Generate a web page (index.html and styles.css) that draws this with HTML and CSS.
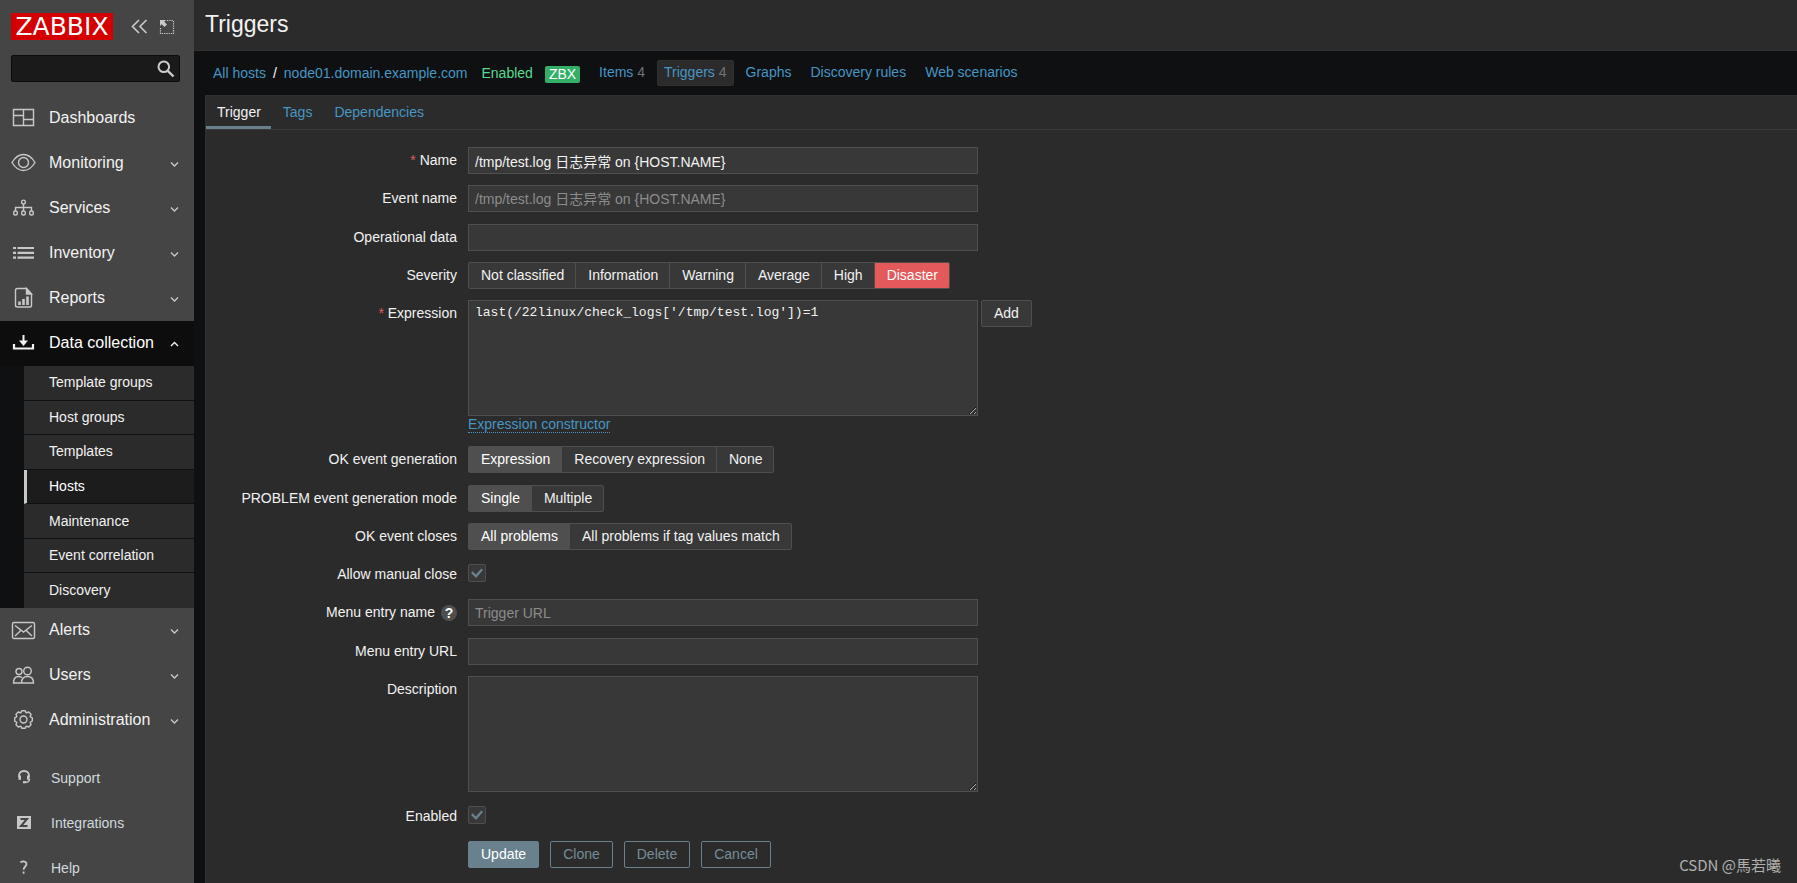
FILE: index.html
```html
<!DOCTYPE html>
<html lang="en">
<head>
<meta charset="utf-8">
<title>Triggers</title>
<link rel="stylesheet" href="styles.css">
</head>
<body>
<aside class="sidebar">
  <div class="sidebar-header">
    <a class="logo" href="#">ZABBIX</a>
    <button class="icon-button" type="button" aria-label="Collapse sidebar">
      <svg width="17" height="15" viewBox="0 0 17 15"><path d="M8 1 1.500 7.500 8 14M15.500 1 9 7.500l6.500 6.500" fill="none" stroke="currentColor" stroke-width="1.700"/></svg>
    </button>
    <button class="icon-button" type="button" aria-label="Hide sidebar">
      <svg width="16" height="16" viewBox="0 0 16 16"><path d="M8 1.500h6.500v13h-13V8" fill="none" stroke="currentColor" stroke-width="1.200" stroke-dasharray="1.300 1"/><path d="M1 1h6L5.300 2.700 8 5.400 5.400 8 2.700 5.300 1 7z" fill="currentColor"/></svg>
    </button>
  </div>
  <form class="search" role="search">
    <input class="search-input" type="text" aria-label="Search">
    <button class="search-button" type="button" aria-label="Search">
      <svg width="18" height="18" viewBox="0 0 18 18" fill="none" stroke="currentColor"><circle cx="6.800" cy="6.800" r="5.300" stroke-width="2"/><path d="m10.800 10.800 5.700 5.700" stroke-width="2.400"/></svg>
    </button>
  </form>
  <nav class="menu">
    <a class="menu-item" href="#"><svg class="menu-icon" viewBox="0 0 25 25"><path d="M2.500 4.500h20v16h-20zM12.500 4.500v16M2.500 10.500h10M12.500 14.500h10"/></svg><span class="menu-text">Dashboards</span></a>
    <a class="menu-item" href="#"><svg class="menu-icon" viewBox="0 0 25 25"><path d="M1 12.500C4 7.500 8 4.500 12.500 4.500s8.500 3 11.500 8c-3 5-7 8-11.500 8S4 17.500 1 12.500z"/><circle cx="12.500" cy="12.500" r="5"/></svg><span class="menu-text">Monitoring</span><svg class="chevron" viewBox="0 0 9 7"><path d="m1 1.500 3.500 3.500L8 1.500"/></svg></a>
    <a class="menu-item" href="#"><svg class="menu-icon" viewBox="0 0 25 25"><circle cx="12.500" cy="7" r="1.900"/><path d="M12.500 9v7M4.500 16v-3.500h16V16"/><rect x="2.700" y="16" width="3.600" height="4" rx="1.500"/><rect x="10.700" y="16" width="3.600" height="4" rx="1.500"/><rect x="18.700" y="16" width="3.600" height="4" rx="1.500"/></svg><span class="menu-text">Services</span><svg class="chevron" viewBox="0 0 9 7"><path d="m1 1.500 3.500 3.500L8 1.500"/></svg></a>
    <a class="menu-item" href="#"><svg class="menu-icon" viewBox="0 0 25 25"><path stroke-width="2.200" d="M2 8h3M2 12.800h3M2 17.600h3M6.500 8H23M6.500 12.800H23M6.500 17.600H23"/></svg><span class="menu-text">Inventory</span><svg class="chevron" viewBox="0 0 9 7"><path d="m1 1.500 3.500 3.500L8 1.500"/></svg></a>
    <a class="menu-item" href="#"><svg class="menu-icon" viewBox="0 0 25 25"><path d="M6.500 3.500h9L20.500 9v11.500q0 1.500-1.500 1.500H6.500Q4.500 22 4.500 20.500v-15q0-2 2-2z"/><path fill="currentColor" d="M15.500 3.500V9h5z"/><path stroke-width="2.600" d="M8.500 20v-3.500M12.500 20v-6M16.500 20v-8.500"/></svg><span class="menu-text">Reports</span><svg class="chevron" viewBox="0 0 9 7"><path d="m1 1.500 3.500 3.500L8 1.500"/></svg></a>
    <a class="menu-item menu-item-open" href="#"><svg class="menu-icon" viewBox="0 0 25 25"><path stroke-width="2" d="M12.500 5v7"/><path fill="currentColor" stroke="none" d="M8 10.500h9l-4.500 5.500z"/><path stroke-width="2.200" d="M3 14v4.500h19V14"/></svg><span class="menu-text">Data collection</span><svg class="chevron" viewBox="0 0 9 7"><path d="m1 5 3.500-3.500L8 5"/></svg></a>
    <div class="submenu">
      <a class="submenu-item" href="#">Template groups</a>
      <a class="submenu-item" href="#">Host groups</a>
      <a class="submenu-item" href="#">Templates</a>
      <a class="submenu-item submenu-item-active" href="#">Hosts</a>
      <a class="submenu-item" href="#">Maintenance</a>
      <a class="submenu-item" href="#">Event correlation</a>
      <a class="submenu-item" href="#">Discovery</a>
    </div>
    <a class="menu-item" href="#"><svg class="menu-icon" viewBox="0 0 25 25"><rect x="1.500" y="5.500" width="22" height="16" rx="1.500"/><path d="M4 8.500 12.500 15 21 8.500M4 19l6-5.800M21 19l-6-5.800"/></svg><span class="menu-text">Alerts</span><svg class="chevron" viewBox="0 0 9 7"><path d="m1 1.500 3.500 3.500L8 1.500"/></svg></a>
    <a class="menu-item" href="#"><svg class="menu-icon" viewBox="0 0 25 25"><circle cx="8" cy="9.500" r="3"/><circle cx="16.500" cy="9" r="3.800"/><path d="M10.500 21c0-4.500 2-6.500 6-6.500s6 2 6 6.500zM10.500 21h-8c0-4 1.500-6.500 5-6.500q2 0 3.500 1"/></svg><span class="menu-text">Users</span><svg class="chevron" viewBox="0 0 9 7"><path d="m1 1.500 3.500 3.500L8 1.500"/></svg></a>
    <a class="menu-item" href="#"><svg class="menu-icon" viewBox="0 0 25 25"><path stroke-linejoin="round" transform="translate(12.500 12.500)" d="M8.800-1.600v3.200L6.650 2.750 7.500 5.200 5.200 7.500 2.750 6.650 1.600 8.800h-3.200L-2.750 6.650-5.200 7.500-7.500 5.200-6.650 2.750-8.800 1.600v-3.200L-6.650-2.750-7.500-5.200-5.200-7.500-2.750-6.650-1.600-8.800h3.200L2.750-6.650 5.200-7.500 7.500-5.200 6.650-2.750z"/><circle cx="12.500" cy="12.500" r="3.500"/></svg><span class="menu-text">Administration</span><svg class="chevron" viewBox="0 0 9 7"><path d="m1 1.500 3.500 3.500L8 1.500"/></svg></a>
  </nav>
  <nav class="user-menu">
    <a class="user-item" href="#"><svg class="menu-icon" viewBox="0 0 25 25"><path stroke-width="1.800" d="M8 12c-.5-3.800 1.500-6 5-6s5.500 2.200 5 6"/><path stroke-width="2.600" d="M8.700 10.500v4.200M17.300 10.500v4.200"/><path d="M18.500 14c0 2.500-1.500 3.300-4 3.300"/><path stroke-width="2.200" d="M12 17.200h3"/></svg><span>Support</span></a>
    <a class="user-item" href="#"><svg class="menu-icon" viewBox="0 0 25 25"><path fill="currentColor" stroke="none" d="M6 6h14v13H6z"/><path class="icon-knockout" d="M9.500 9h6.500L10 16h6.500"/></svg><span>Integrations</span></a>
    <a class="user-item" href="#"><svg class="menu-icon" viewBox="0 0 25 25"><path stroke-width="1.800" d="M9.500 7.500c2.500-1.800 6-1.200 6 1.600 0 2.400-2.900 2.500-2.900 5.700M12.600 16.500v2.200"/></svg><span>Help</span></a>
  </nav>
</aside>

<main class="main">
  <header class="page-header"><h1 class="page-title">Triggers</h1></header>
  <nav class="host-nav">
    <a class="link" href="#">All hosts</a>
    <span class="separator">/</span>
    <a class="link" href="#">node01.domain.example.com</a>
    <span class="status">Enabled</span>
    <span class="badge">ZBX</span>
    <ul class="entity-list">
      <li><a class="entity" href="#">Items <span class="count">4</span></a></li>
      <li><a class="entity entity-active" href="#">Triggers <span class="count">4</span></a></li>
      <li><a class="entity" href="#">Graphs</a></li>
      <li><a class="entity" href="#">Discovery rules</a></li>
      <li><a class="entity" href="#">Web scenarios</a></li>
    </ul>
  </nav>
  <section class="panel">
    <nav class="tabs">
      <a class="tab tab-active" href="#">Trigger</a>
      <a class="tab" href="#">Tags</a>
      <a class="tab" href="#">Dependencies</a>
    </nav>
    <form class="trigger-form">
      <div class="form-group">
        <div class="row">
          <label class="label" for="name"><span class="required">*</span> Name</label>
          <input class="text" id="name" type="text" value="/tmp/test.log 日志异常 on {HOST.NAME}">
        </div>
        <div class="row">
          <label class="label" for="event-name">Event name</label>
          <input class="text" id="event-name" type="text" placeholder="/tmp/test.log 日志异常 on {HOST.NAME}">
        </div>
      </div>
      <div class="form-group">
        <div class="row">
          <label class="label" for="opdata">Operational data</label>
          <input class="text" id="opdata" type="text">
        </div>
        <div class="row">
          <span class="label" id="severity-label">Severity</span>
          <div class="segments" role="radiogroup" aria-labelledby="severity-label">
            <label class="segment"><input type="radio" name="severity">Not classified</label>
            <label class="segment"><input type="radio" name="severity">Information</label>
            <label class="segment"><input type="radio" name="severity">Warning</label>
            <label class="segment"><input type="radio" name="severity">Average</label>
            <label class="segment"><input type="radio" name="severity">High</label>
            <label class="segment segment-disaster"><input type="radio" name="severity" checked>Disaster</label>
          </div>
        </div>
        <div class="row">
          <label class="label" for="expression"><span class="required">*</span> Expression</label>
          <div class="field">
            <div class="field-line">
              <textarea class="text area mono" id="expression" spellcheck="false">last(/22linux/check_logs['/tmp/test.log'])=1</textarea>
              <button class="button button-grey" type="button">Add</button>
            </div>
            <div class="field-note"><a class="link link-dotted" href="#">Expression constructor</a></div>
          </div>
        </div>
      </div>
      <div class="form-group">
        <div class="row">
          <span class="label" id="recovery-label">OK event generation</span>
          <div class="segments" role="radiogroup" aria-labelledby="recovery-label">
            <label class="segment"><input type="radio" name="recovery" checked>Expression</label>
            <label class="segment"><input type="radio" name="recovery">Recovery expression</label>
            <label class="segment"><input type="radio" name="recovery">None</label>
          </div>
        </div>
      </div>
      <div class="form-group">
        <div class="row">
          <span class="label" id="mode-label">PROBLEM event generation mode</span>
          <div class="segments" role="radiogroup" aria-labelledby="mode-label">
            <label class="segment"><input type="radio" name="mode" checked>Single</label>
            <label class="segment"><input type="radio" name="mode">Multiple</label>
          </div>
        </div>
        <div class="row">
          <span class="label" id="closes-label">OK event closes</span>
          <div class="segments" role="radiogroup" aria-labelledby="closes-label">
            <label class="segment"><input type="radio" name="closes" checked>All problems</label>
            <label class="segment"><input type="radio" name="closes">All problems if tag values match</label>
          </div>
        </div>
        <div class="row">
          <label class="label" for="manual-close">Allow manual close</label>
          <input class="checkbox" id="manual-close" type="checkbox" checked>
        </div>
        <div class="row">
          <div class="label label-with-help"><label for="url-name">Menu entry name</label><button class="help" type="button" aria-label="Help">?</button></div>
          <input class="text" id="url-name" type="text" placeholder="Trigger URL">
        </div>
      </div>
      <div class="form-group">
        <div class="row">
          <label class="label" for="url">Menu entry URL</label>
          <input class="text" id="url" type="text">
        </div>
        <div class="row">
          <label class="label" for="description">Description</label>
          <textarea class="text area" id="description"></textarea>
        </div>
        <div class="row">
          <label class="label" for="enabled">Enabled</label>
          <input class="checkbox" id="enabled" type="checkbox" checked>
        </div>
        <div class="row">
          <span></span>
          <div class="actions">
            <button class="button button-primary" type="button">Update</button>
            <button class="button" type="button">Clone</button>
            <button class="button" type="button">Delete</button>
            <button class="button" type="button">Cancel</button>
          </div>
        </div>
      </div>
    </form>
  </section>
</main>
<div class="watermark">CSDN @馬若曦</div>
</body>
</html>
```

FILE: styles.css
```css
* {
  box-sizing: border-box;
}

body {
  margin: 0;
  height: 100vh;
  display: flex;
  overflow: hidden;
  background: #0e1012;
  color: #f2f2f2;
  font: 14px/18px "Liberation Sans", Arial, "Noto Sans CJK SC", sans-serif;
}

a {
  color: inherit;
  text-decoration: none;
}

button,
input,
textarea {
  font: inherit;
  color: inherit;
  margin: 0;
}

/* Sidebar */

.sidebar {
  flex: 0 0 194px;
  background: #454545;
  overflow: hidden;
}

.sidebar-header {
  display: flex;
  align-items: center;
  padding: 13px 0 0 11px;
}

.logo {
  flex: none;
  width: 102px;
  margin-right: 18px;
  background: #d40000;
  color: #ffffff;
  font: 25px/27px "DejaVu Sans", sans-serif;
  text-align: center;
}

.icon-button {
  display: flex;
  padding: 0;
  margin-right: 11px;
  border: 0;
  background: none;
  color: #c8c8c8;
}

.search {
  display: flex;
  align-items: center;
  height: 27px;
  margin: 15px 14px 14px 11px;
  padding-right: 4px;
  border: 1px solid #0a0d10;
  border-radius: 2px;
  background: #1a1a1a;
}

.search-input {
  flex: 1;
  min-width: 0;
  padding: 0 6px;
  border: 0;
  background: none;
}

.search-button {
  display: flex;
  padding: 0;
  border: 0;
  background: none;
  color: #cccccc;
}

.menu-item {
  display: flex;
  align-items: center;
  height: 45px;
  padding: 0 15px 2px 11px;
  font-size: 16px;
}

.menu-item-open {
  background: #0d0d0d;
  color: #ffffff;
}

.menu-icon {
  flex: none;
  width: 25px;
  height: 25px;
  fill: none;
  stroke: currentColor;
  stroke-width: 1.4;
  color: #c8c8c8;
}

.menu-item-open .menu-icon,
.menu-item-open .chevron {
  color: #f2f2f2;
}

.icon-knockout {
  stroke: #454545;
  stroke-width: 2;
}

.menu-text {
  flex: 1;
  padding-left: 13px;
}

.chevron {
  width: 9px;
  height: 7px;
  margin-top: 4px;
  fill: none;
  stroke: currentColor;
  stroke-width: 1.4;
  color: #c8c8c8;
}

.submenu {
  display: grid;
  grid-auto-rows: 1fr;
  min-height: 242px;
  padding-left: 24px;
  background: #0e1012;
}

.submenu-item {
  display: flex;
  align-items: center;
  padding-left: 25px;
  padding-bottom: 1px;
  background: #2b2b2b;
  border-bottom: 1px solid #0e1012;
}

.submenu-item:last-child {
  border-bottom: 0;
}

.submenu-item-active {
  padding-left: 22px;
  border-left: 3px solid #c8c8c8;
  background: #1c1c1c;
  color: #ffffff;
}

.user-menu {
  margin-top: 12px;
}

.user-item {
  display: flex;
  align-items: center;
  gap: 15px;
  height: 45px;
  padding-left: 11px;
  color: #d0d9de;
}

/* Page header and host navigation */

.main {
  flex: 1;
  min-width: 0;
  display: flex;
  flex-direction: column;
}

.page-header {
  flex: none;
  padding: 10px 11px 12px;
  background: #2b2b2b;
  border-bottom: 1px solid #303030;
}

.page-title {
  margin: 0;
  font-size: 23px;
  line-height: 28px;
  font-weight: 400;
}

.host-nav {
  flex: none;
  display: flex;
  align-items: center;
  height: 44px;
  padding: 0 0 1px 19px;
}

.link {
  color: #4796c4;
}

.separator {
  margin: 0 7px;
  color: #ffffff;
}

.status {
  margin-left: 14px;
  color: #59db8f;
}

.badge {
  margin: 3px 0 0 12px;
  padding: 0 4px;
  border-radius: 2px;
  background: #34af67;
  color: #ffffff;
  line-height: 17px;
}

.entity-list {
  display: flex;
  gap: 5px;
  margin: 0 0 0 12px;
  padding: 0;
  list-style: none;
}

.entity {
  display: block;
  padding: 3px 6px 4px;
  border: 1px solid transparent;
  border-radius: 2px;
  line-height: 17px;
  color: #4796c4;
}

.entity-active {
  background: #2b2b2b;
  border-color: #303030;
}

.count {
  color: #737373;
}

/* Panel and tabs */

.panel {
  flex: 1;
  margin-left: 11px;
  background: #2b2b2b;
  border: 1px solid #303030;
  border-width: 1px 0 0 1px;
}

.tabs {
  display: flex;
  gap: 1px;
  border-bottom: 1px solid #383838;
}

.tab {
  padding: 9px 10px 6px 11px;
  border-bottom: 3px solid transparent;
  line-height: 15px;
  color: #4796c4;
}

.tab-active {
  border-bottom-color: #69808d;
  color: #f2f2f2;
}

/* Form */

.trigger-form {
  display: flex;
  flex-direction: column;
  gap: 12px;
  padding: 17px 0;
}

.form-group {
  display: flex;
  flex-direction: column;
  gap: 11px;
}

.row {
  display: grid;
  grid-template-columns: 251px minmax(0, 1fr);
  column-gap: 11px;
  align-items: start;
  justify-items: start;
}

.label {
  justify-self: end;
  line-height: 27px;
}

.label-with-help {
  display: flex;
  align-items: center;
  gap: 6px;
}

.help {
  width: 16px;
  height: 16px;
  padding: 0;
  border: 0;
  border-radius: 50%;
  background: #4f4f4f;
  color: #ffffff;
  font-weight: 700;
  line-height: 14px;
}

.required {
  color: #e45959;
}

.text {
  width: 100%;
  max-width: 510px;
  height: 27px;
  padding: 0 6px;
  border: 1px solid #4f4f4f;
  border-radius: 0;
  background: #383838;
}

.text::placeholder {
  color: #8c8c8c;
  opacity: 1;
}

.area {
  display: block;
  height: 116px;
  padding: 3px 6px;
  resize: vertical;
}

.mono {
  font-family: "Liberation Mono", monospace;
  font-size: 13px;
}

.field {
  width: 100%;
}

.field-line {
  display: flex;
  align-items: flex-start;
  gap: 3px;
}

.field-note {
  height: 18px;
  line-height: 17px;
}

.link-dotted {
  display: inline-block;
  line-height: 16px;
  border-bottom: 1px dotted #4796c4;
}

.segments {
  display: flex;
}

.segment {
  padding: 0 11px 0 12px;
  border: 1px solid #4f4f4f;
  background: #383838;
  line-height: 25px;
}

.segment + .segment {
  margin-left: -1px;
}

.segment:first-child {
  border-radius: 2px 0 0 2px;
}

.segment:last-child {
  border-radius: 0 2px 2px 0;
}

.segment input {
  position: absolute;
  opacity: 0;
  pointer-events: none;
}

.segment:has(input:checked) {
  background: #4f4f4f;
  color: #ffffff;
}

.segment-disaster:has(input:checked) {
  background: #e45959;
}

.checkbox {
  appearance: none;
  display: grid;
  place-items: center;
  width: 18px;
  height: 18px;
  margin-top: 3px;
  border: 1px solid #4f4f4f;
  border-radius: 2px;
  background: #383838;
}

.checkbox:checked::before {
  content: "";
  width: 12px;
  height: 10px;
  background: #69808d;
  clip-path: polygon(0 50%, 14% 32%, 40% 66%, 86% 4%, 100% 20%, 42% 100%);
}

.button {
  height: 27px;
  padding: 0 12px;
  border: 1px solid #69808d;
  border-radius: 2px;
  background: none;
  color: #768d99;
  line-height: 25px;
}

.button-primary {
  background: #69808d;
  color: #ffffff;
}

.button-grey {
  border-color: #4f4f4f;
  background: #383838;
  color: #f2f2f2;
}

.actions {
  display: flex;
  gap: 11px;
}

.watermark {
  position: absolute;
  right: 16px;
  bottom: 7px;
  color: #b0b0b0;
  font: 15px/22px "Noto Sans CJK SC", sans-serif;
}
```
